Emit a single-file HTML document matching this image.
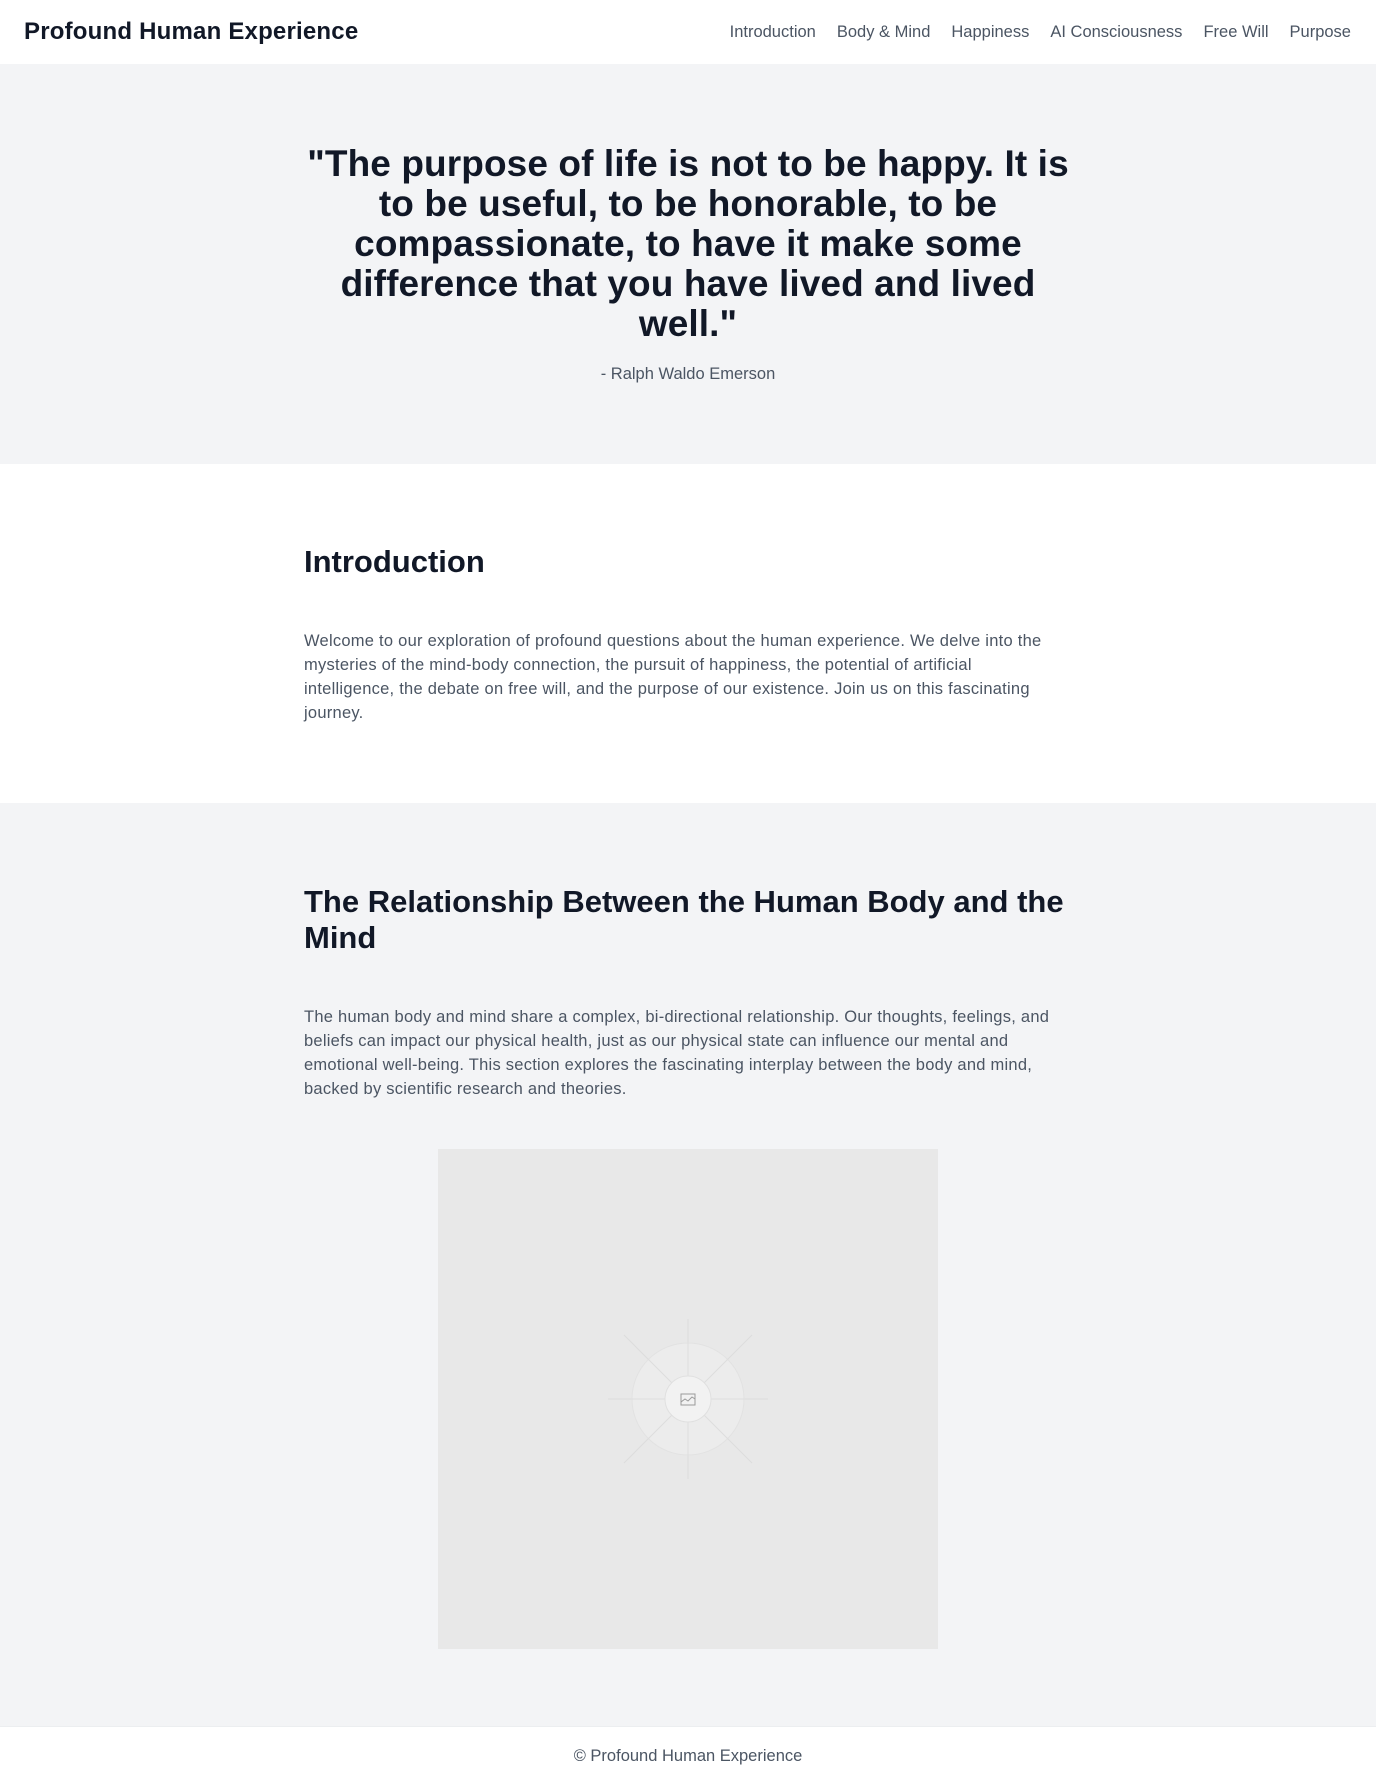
<!DOCTYPE html>
<html><head><meta charset="utf-8"><style>
*{margin:0;padding:0;box-sizing:border-box}
body{width:1376px;height:1784px;font-family:"Liberation Sans",sans-serif;background:#fff;color:#111827;overflow:hidden}
nav{height:64px;display:flex;align-items:center;justify-content:space-between;padding:0 25px 0 24px;background:#fff}
.logo{font-size:24px;font-weight:bold;color:#111827;letter-spacing:0.2px}
.links{display:flex;gap:21px;font-size:16.5px;color:#4b5563}
.hero{background:#f3f4f6;height:400px;padding-top:80px;text-align:center}
.hero h1{width:780px;margin:0 auto;font-size:37px;line-height:40px;font-weight:bold;color:#111827;letter-spacing:0.1px}
.hero p{margin-top:21px;font-size:16.5px;color:#4b5563}
.sec{padding:80px 0}
.wrap{width:768px;margin:0 auto}
h2{font-size:31px;line-height:36px;font-weight:bold;color:#111827}
.sec p{font-size:16.5px;line-height:24px;color:#4b5563;letter-spacing:0.25px}
.s1{height:339px;padding-top:80px}
.s1 p{margin-top:49px;width:755px}
.s2{background:#f3f4f6;height:923px;padding-top:81px}
.s2 p{margin-top:49px}
.img{width:500px;height:500px;margin:48px auto 0;background:#e8e8e8;position:relative}
footer{height:58px;border-top:1px solid #eceef0;text-align:center;padding-top:20px;font-size:16.5px;color:#4b5563}
</style></head><body>
<nav><div class="logo">Profound Human Experience</div>
<div class="links"><span>Introduction</span><span>Body &amp; Mind</span><span>Happiness</span><span>AI Consciousness</span><span>Free Will</span><span>Purpose</span></div></nav>
<div class="hero"><h1>"The purpose of life is not to be happy. It is to be useful, to be honorable, to be compassionate, to have it make some difference that you have lived and lived well."</h1><p>- Ralph Waldo Emerson</p></div>
<div class="sec s1"><div class="wrap"><h2>Introduction</h2><p>Welcome to our exploration of profound questions about the human experience. We delve into the mysteries of the mind-body connection, the pursuit of happiness, the potential of artificial intelligence, the debate on free will, and the purpose of our existence. Join us on this fascinating journey.</p></div></div>
<div class="sec s2"><div class="wrap"><h2>The Relationship Between the Human Body and the Mind</h2><p>The human body and mind share a complex, bi-directional relationship. Our thoughts, feelings, and beliefs can impact our physical health, just as our physical state can influence our mental and emotional well-being. This section explores the fascinating interplay between the body and mind, backed by scientific research and theories.</p></div>
<div class="img"><svg width="500" height="500" viewBox="0 0 500 500" style="position:absolute;left:0;top:0">
<g stroke="#dcdcdc" stroke-width="1">
<line x1="250" y1="170" x2="250" y2="330"/><line x1="170" y1="250" x2="330" y2="250"/>
<line x1="186" y1="186" x2="314" y2="314"/><line x1="314" y1="186" x2="186" y2="314"/></g>
<circle cx="250" cy="250" r="56" fill="#eeeeee" fill-opacity="0.7" stroke="#e2e2e2"/>
<g stroke="#dedede"><line x1="250" y1="194" x2="250" y2="306"/><line x1="194" y1="250" x2="306" y2="250"/><line x1="210" y1="210" x2="290" y2="290"/><line x1="290" y1="210" x2="210" y2="290"/></g>
<circle cx="250" cy="250" r="23" fill="#f2f2f2" stroke="#e0e0e0"/>
<rect x="243" y="245" width="14" height="11" fill="none" stroke="#9a9a9a" stroke-width="1"/>
<path d="M243 253 L247 250 L250 252 L254 248 L257 250" fill="none" stroke="#9a9a9a" stroke-width="1"/>
</svg></div></div>
<footer>© Profound Human Experience</footer>
</body></html>
